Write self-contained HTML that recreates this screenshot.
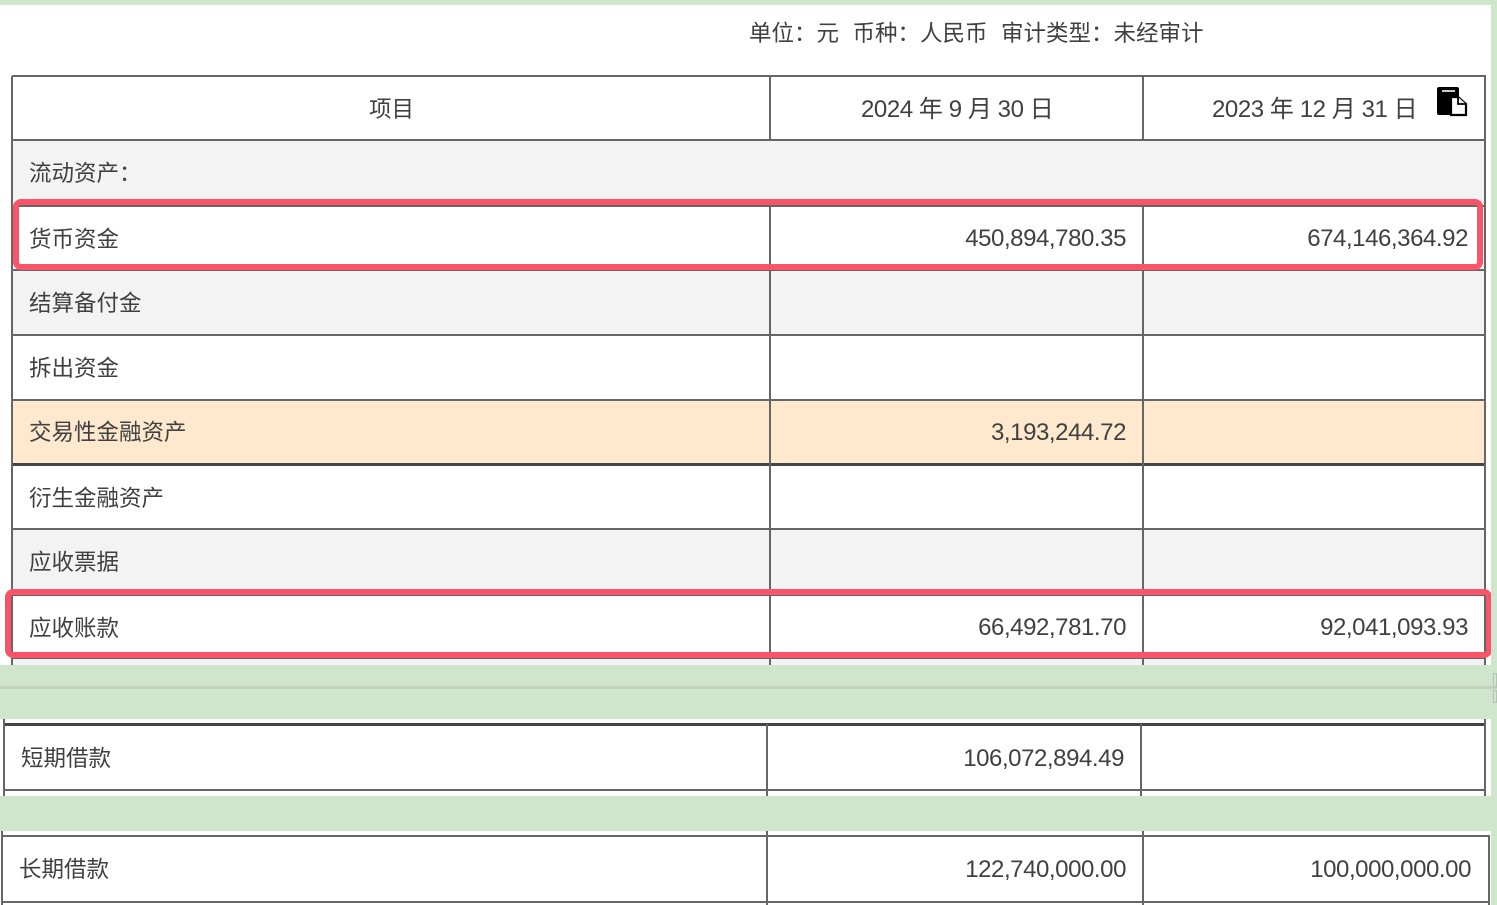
<!DOCTYPE html>
<html><head><meta charset="utf-8"><style>
html,body{margin:0;padding:0;background:#fff}
body{width:1497px;height:905px;position:relative;overflow:hidden;font-family:"Liberation Sans","Noto Sans CJK SC",sans-serif;color:#444}
.a{position:absolute}
.g{position:absolute;background:#d0e6cc}
.h{position:absolute;height:2px;background:#666}
.v{position:absolute;width:2px;background:#666}
.t{position:absolute;font-size:22.5px;line-height:30px;white-space:nowrap;color:#404040}
.n{position:absolute;font-size:24px;line-height:30px;white-space:nowrap;text-align:right;color:#404040;letter-spacing:-.43px}
.r{position:absolute;border:6px solid #fb5367;border-radius:8px;box-sizing:border-box}
</style></head><body>
<div class="a" style="left:13px;top:141px;width:1472px;height:64px;background:#f3f3f3"></div>
<div class="a" style="left:13px;top:271px;width:1472px;height:64px;background:#f3f3f3"></div>
<div class="a" style="left:13px;top:400px;width:1472px;height:64px;background:#fee9cf"></div>
<div class="a" style="left:13px;top:530px;width:1472px;height:64px;background:#f3f3f3"></div>
<div class="a" style="left:13px;top:659px;width:1472px;height:7px;background:#f3f3f3"></div>

<div class="h" style="left:12px;top:75px;width:1474px"></div>
<div class="h" style="left:12px;top:139px;width:1474px"></div>
<div class="h" style="left:12px;top:205px;width:1474px"></div>
<div class="h" style="left:12px;top:269px;width:1474px"></div>
<div class="h" style="left:12px;top:334px;width:1474px"></div>
<div class="h" style="left:12px;top:399px;width:1474px"></div>
<div class="h" style="left:12px;top:463px;width:1474px;height:3px;background:#444"></div>
<div class="h" style="left:12px;top:528px;width:1474px"></div>
<div class="h" style="left:12px;top:594px;width:1474px"></div>
<div class="h" style="left:12px;top:657px;width:1474px"></div>
<div class="v" style="left:11px;top:76px;height:590px"></div>
<div class="v" style="left:769px;top:76px;height:64px"></div>
<div class="v" style="left:1142px;top:76px;height:64px"></div>
<div class="v" style="left:769px;top:205px;height:461px"></div>
<div class="v" style="left:1142px;top:205px;height:461px"></div>
<div class="v" style="left:1484px;top:76px;height:590px"></div>

<div class="t" style="left:749px;top:19px;word-spacing:.5px">单位：元&nbsp; 币种：人民币&nbsp; 审计类型：未经审计</div>
<div class="t" style="left:369px;top:95px">项目</div>
<div class="n" style="left:861px;top:95px">2024 年 9 月 30 日</div>
<div class="n" style="left:1212px;top:95px">2023 年 12 月 31 日</div>

<svg class="a" style="left:1436px;top:86px" width="32" height="32" viewBox="0 0 32 32">
<path d="M1 3a2 2 0 0 1 2-2h18a2 2 0 0 1 2 2v8h-8v18H3a2 2 0 0 1-2-2z" fill="#000"/>
<rect x="6" y="4" width="13" height="2" fill="#ccc"/>
<path d="M15 11h7l8 7v11H15z" fill="#fff" stroke="#000" stroke-width="2.2"/>
<path d="M22 11v7h8" fill="#eee" stroke="#000" stroke-width="1.8"/>
</svg>

<div class="t" style="left:29px;top:159px">流动资产：</div>
<div class="t" style="left:29px;top:225px">货币资金</div>
<div class="t" style="left:29px;top:289px">结算备付金</div>
<div class="t" style="left:29px;top:354px">拆出资金</div>
<div class="t" style="left:29px;top:418px">交易性金融资产</div>
<div class="t" style="left:29px;top:484px">衍生金融资产</div>
<div class="t" style="left:29px;top:548px">应收票据</div>
<div class="t" style="left:29px;top:614px">应收账款</div>

<div class="n" style="right:371px;top:224px">450,894,780.35</div>
<div class="n" style="right:29px;top:224px">674,146,364.92</div>
<div class="n" style="right:371px;top:418px">3,193,244.72</div>
<div class="n" style="right:371px;top:613px">66,492,781.70</div>
<div class="n" style="right:29px;top:613px">92,041,093.93</div>

<div class="r" style="left:13px;top:199px;width:1470px;height:71px"></div>
<div class="r" style="left:5px;top:589px;width:1487px;height:69px"></div>

<div class="h" style="left:4px;top:723px;width:1482px;height:3px;background:#444"></div>
<div class="h" style="left:4px;top:789px;width:1482px"></div>
<div class="v" style="left:3px;top:718px;height:78px"></div>
<div class="v" style="left:766px;top:724px;height:72px"></div>
<div class="v" style="left:1140px;top:724px;height:72px"></div>
<div class="v" style="left:1484px;top:718px;height:78px"></div>
<div class="t" style="left:21px;top:744px">短期借款</div>
<div class="n" style="right:373px;top:744px">106,072,894.49</div>

<div class="h" style="left:1px;top:835px;width:1489px"></div>
<div class="h" style="left:1px;top:901px;width:1489px"></div>
<div class="v" style="left:1px;top:831px;height:74px"></div>
<div class="v" style="left:766px;top:831px;height:74px"></div>
<div class="v" style="left:1142px;top:831px;height:74px"></div>
<div class="v" style="left:1488px;top:836px;height:69px"></div>
<div class="t" style="left:19px;top:855px">长期借款</div>
<div class="n" style="right:371px;top:855px">122,740,000.00</div>
<div class="n" style="right:26px;top:855px">100,000,000.00</div>

<div class="g" style="left:0;top:0;width:1497px;height:5px"></div>
<div class="g" style="left:1491px;top:0;width:6px;height:905px"></div>
<div class="g" style="left:0;top:665px;width:1497px;height:54px"></div>
<div class="a" style="left:0;top:686px;width:1497px;height:3px;background:#c3d3c0"></div>
<div class="a" style="left:1493px;top:673px;width:4px;height:15px;border:1px solid #b5c5b2;box-sizing:border-box"></div>
<div class="a" style="left:1493px;top:690px;width:4px;height:13px;border:1px solid #b5c5b2;box-sizing:border-box"></div>
<div class="g" style="left:0;top:796px;width:1497px;height:35px"></div>
</body></html>
